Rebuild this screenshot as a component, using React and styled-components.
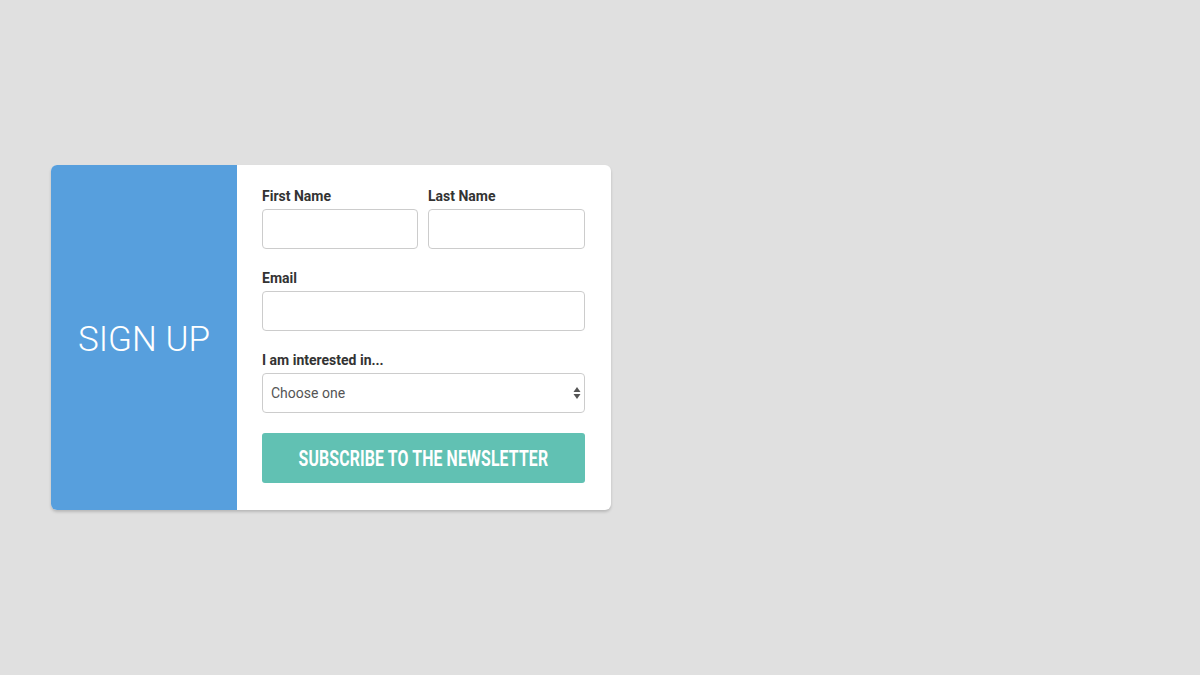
import React from "react";
import styled, { createGlobalStyle } from "styled-components";

const Global = createGlobalStyle`
  html, body { margin: 0; padding: 0; background: #e0e0e0; }
  body { font-family: Roboto, "Liberation Sans", sans-serif; width: 1200px; height: 675px; }
  * { box-sizing: border-box; }
`;

const Page = styled.div`
  display: flex;
  align-items: flex-start;
  padding: 165px 0 0 51px;
  height: 675px;
`;

const Card = styled.div`
  display: flex;
  width: 560px;
  height: 345px;
  border-radius: 6px;
  overflow: hidden;
  background: #fff;
  box-shadow: 0 2px 3px rgba(0, 0, 0, 0.18);
`;

const Side = styled.div`
  width: 186px;
  flex: none;
  background: #579fdd;
  display: flex;
  align-items: center;
  justify-content: center;
  padding-top: 3px;
`;

const Title = styled.h1`
  margin: 0;
  font-family: Roboto, sans-serif;
  font-weight: 300;
  font-size: 35px;
  color: #fff;
`;

const Form = styled.form`
  width: 374px;
  flex: none;
  min-width: 0;
  padding: 22px 26px 27px 25px;
  display: flex;
  flex-direction: column;
  gap: 20px;
`;

const Row = styled.div`
  display: grid;
  grid-template-columns: 156px 157px;
  column-gap: 10px;
`;

const Field = styled.div`
  display: flex;
  flex-direction: column;
`;

const Label = styled.label`
  font-family: Roboto, sans-serif;
  font-weight: 700;
  font-size: 14px;
  line-height: 18px;
  color: #333;
  margin-bottom: 4px;
`;

const Input = styled.input`
  height: 40px;
  width: 100%;
  border: 1px solid #ccc;
  border-radius: 4px;
  background: #fff;
  font-family: Roboto, sans-serif;
  font-size: 14px;
  padding: 0 9px;
  outline: none;
`;

const SelectWrap = styled.div`
  position: relative;
  height: 40px;
`;

const Select = styled.select`
  appearance: none;
  -webkit-appearance: none;
  width: 100%;
  height: 40px;
  border: 1px solid #ccc;
  border-radius: 4px;
  background: #fff;
  font-family: Roboto, sans-serif;
  font-size: 14px;
  color: #555;
  padding: 0 8px;
  outline: none;
`;

const Arrows = styled.svg`
  position: absolute;
  right: 4px;
  top: 13px;
  pointer-events: none;
`;

const Button = styled.button`
  width: 100%;
  height: 50px;
  border: none;
  border-radius: 3px;
  background: #61c1b3;
  color: #fff;
  display: flex;
  align-items: center;
  justify-content: center;
  padding: 0;
  overflow: hidden;
  cursor: pointer;
`;

const ButtonText = styled.span`
  display: inline-block;
  flex: none;
  font-family: Roboto, sans-serif;
  font-weight: 700;
  font-size: 22px;
  line-height: 22px;
  text-transform: uppercase;
  white-space: nowrap;
  letter-spacing: 0.2px;
  transform: scaleX(0.72);
  padding-top: 1px;
`;

export default function App() {
  return (
    <>
      <Global />
      <Page>
        <Card>
          <Side>
            <Title>SIGN UP</Title>
          </Side>
          <Form onSubmit={(e) => e.preventDefault()}>
            <Row>
              <Field>
                <Label>First Name</Label>
                <Input type="text" />
              </Field>
              <Field>
                <Label>Last Name</Label>
                <Input type="text" />
              </Field>
            </Row>
            <Field>
              <Label>Email</Label>
              <Input type="email" />
            </Field>
            <Field>
              <Label>I am interested in...</Label>
              <SelectWrap>
                <Select defaultValue="">
                  <option value="">Choose one</option>
                  <option>News</option>
                  <option>Offers</option>
                </Select>
                <Arrows width="8" height="14" viewBox="0 0 8 14">
                  <path d="M4 1 L7.5 6 L0.5 6 Z" fill="#555" />
                  <path d="M4 13 L7.5 8 L0.5 8 Z" fill="#555" />
                </Arrows>
              </SelectWrap>
            </Field>
            <Button type="submit">
              <ButtonText>Subscribe to the newsletter</ButtonText>
            </Button>
          </Form>
        </Card>
      </Page>
    </>
  );
}
